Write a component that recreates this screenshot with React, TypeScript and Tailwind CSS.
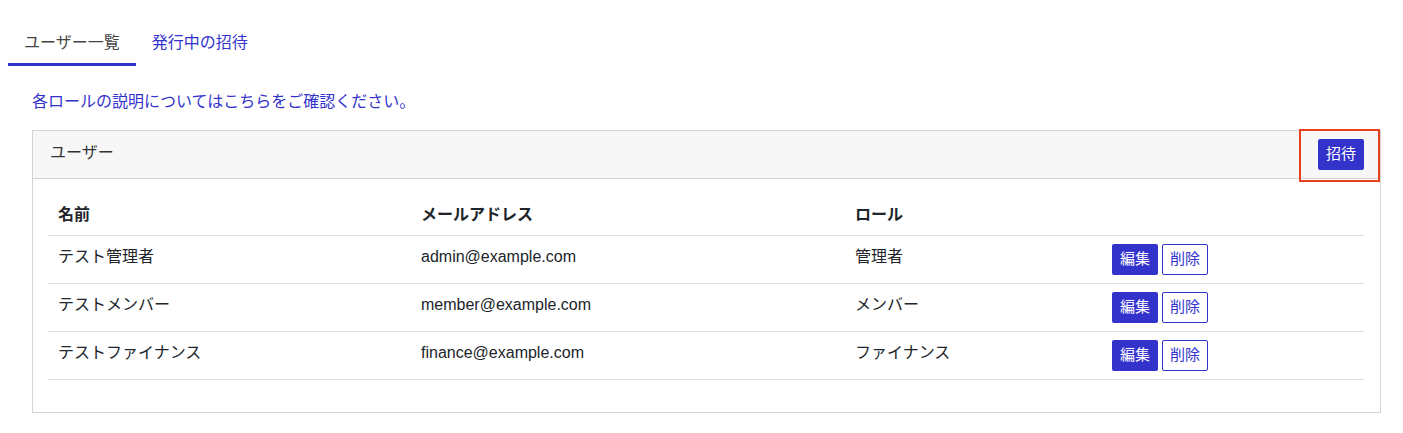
import React from "react";

const users = [
  { name: "テスト管理者", email: "admin@example.com", role: "管理者" },
  { name: "テストメンバー", email: "member@example.com", role: "メンバー" },
  { name: "テストファイナンス", email: "finance@example.com", role: "ファイナンス" },
];

export default function App() {
  return (
    <div
      className="min-h-screen bg-white text-[16px] text-[#212529]"
      style={{ fontFamily: '"Liberation Sans", "Noto Sans CJK JP", sans-serif' }}
    >
      <div className="flex px-2 pt-[23px]">
        <div className="border-b-[3px] border-[#3333cc] px-4 py-2 leading-6 text-[#444]">ユーザー一覧</div>
        <div className="border-b-[3px] border-transparent px-4 py-2 leading-6 text-[#3333cc]">発行中の招待</div>
      </div>

      <div className="pl-8 pr-[22px]">
        <div className="mt-[24px] mb-[16px] leading-6 text-[#3333cc]">各ロールの説明についてはこちらをご確認ください。</div>

        <div className="border border-[#d4d4d4]">
          <div className="relative flex h-[48px] items-center justify-between border-b border-[#d4d4d4] bg-[#f7f7f7] pl-[17px] pr-4">
            <span className="-mt-1 text-[#333]">ユーザー</span>
            <button className="h-[31px] w-[46px] rounded-[2px] bg-[#3333cc] text-[15px] text-white">招待</button>
            <div className="pointer-events-none absolute right-0 -top-[2px] h-[53px] w-[81px] border-2 border-[#e8401e]" />
          </div>

          <div className="pl-[15px] pr-4 pt-4 pb-[32px]">
            <table className="w-full border-collapse text-left">
              <thead>
                <tr className="border-b border-[#dedede]">
                  <th className="h-[40px] w-[363px] px-[10px] font-bold">名前</th>
                  <th className="w-[434px] px-[10px] font-bold">メールアドレス</th>
                  <th className="w-[257px] px-[10px] font-bold">ロール</th>
                  <th className="px-[10px]"></th>
                </tr>
              </thead>
              <tbody>
                {users.map((u) => (
                  <tr key={u.email} className="border-b border-[#dedede]">
                    <td className="h-[48px] px-[10px] align-middle">
                      <span className="-mt-1 block">{u.name}</span>
                    </td>
                    <td className="px-[10px]">
                      <span className="-mt-1 block">{u.email}</span>
                    </td>
                    <td className="px-[10px]">
                      <span className="-mt-1 block">{u.role}</span>
                    </td>
                    <td className="px-[10px]">
                      <div className="flex gap-1">
                        <button className="h-[31px] w-[46px] rounded-[2px] bg-[#3333cc] text-[15px] text-white">編集</button>
                        <button className="h-[31px] w-[46px] rounded-[2px] border border-[#3333cc] bg-white text-[15px] text-[#3333cc]">削除</button>
                      </div>
                    </td>
                  </tr>
                ))}
              </tbody>
            </table>
          </div>
        </div>
      </div>
    </div>
  );
}
